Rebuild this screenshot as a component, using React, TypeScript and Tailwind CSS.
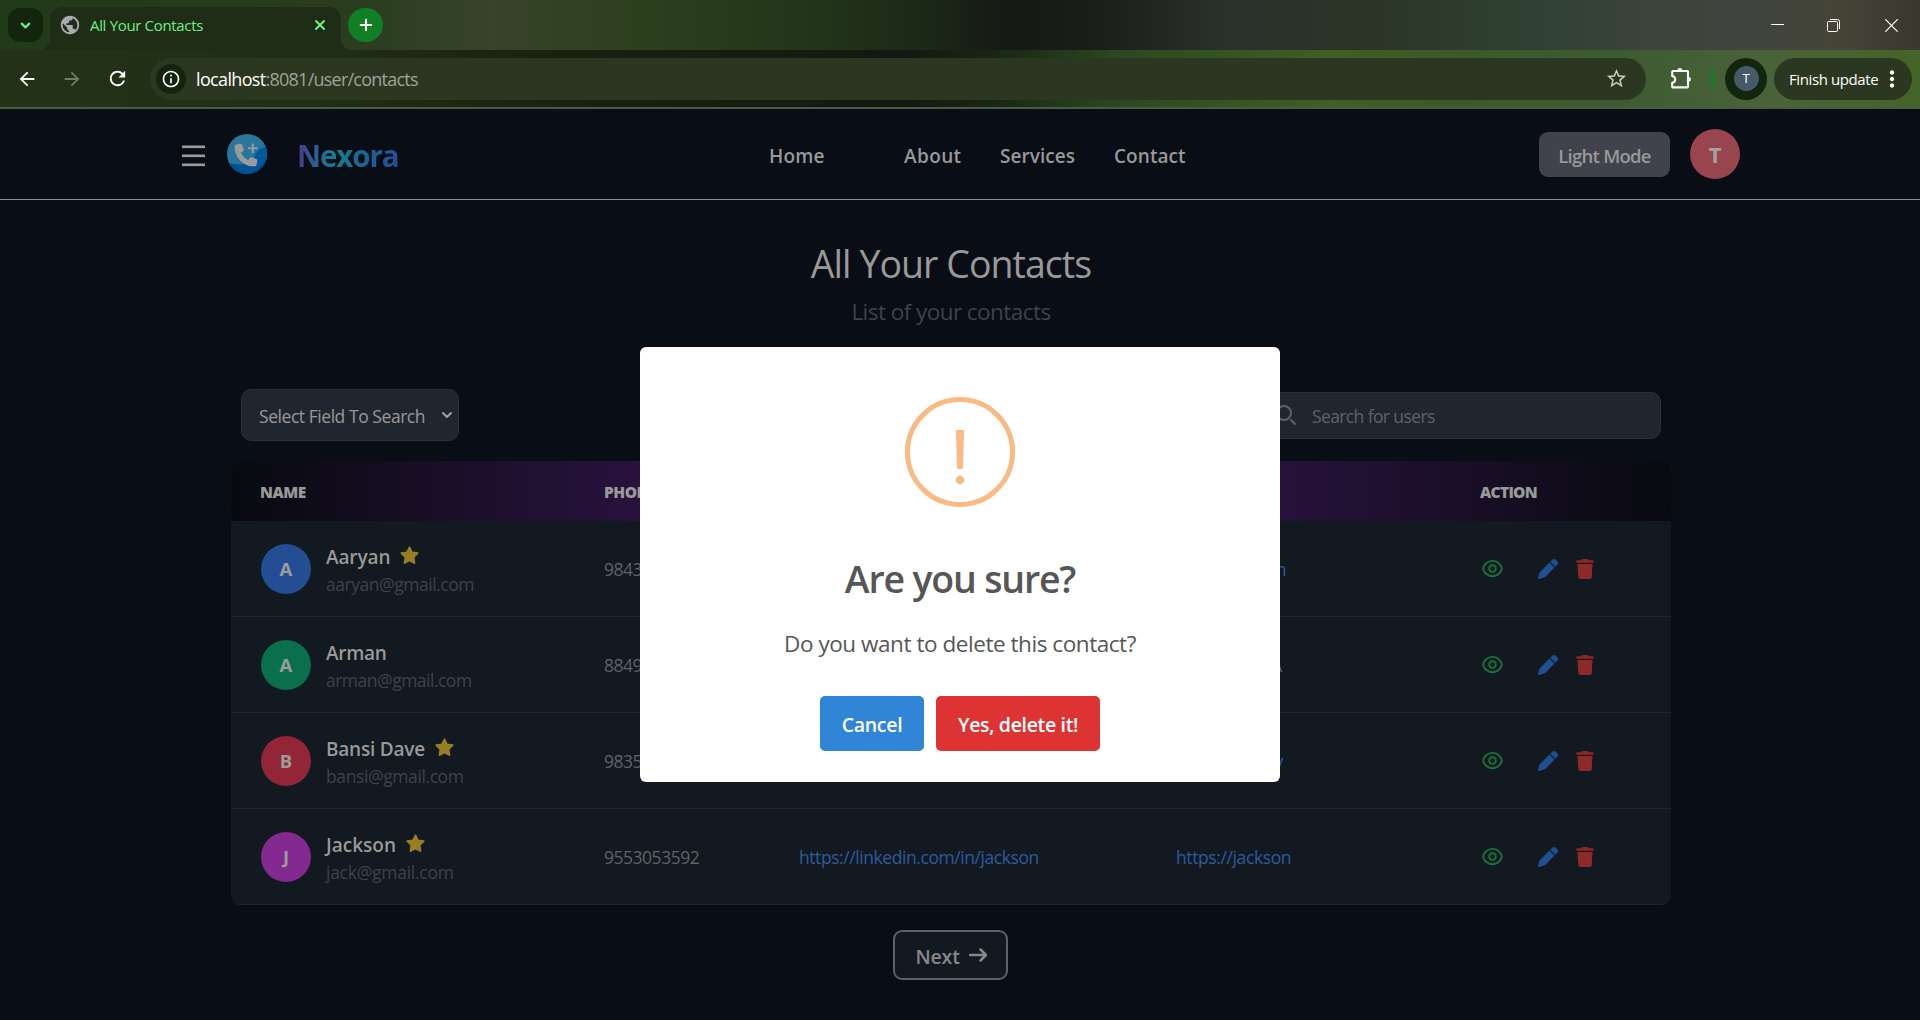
import React from "react";
import {
  MdArrowBack,
  MdArrowForward,
  MdInfoOutline,
  MdMoreVert,
  MdPublic,
  MdRefresh,
  MdStarBorder,
} from "react-icons/md";
import { FaPen, FaPhone, FaTrash } from "react-icons/fa6";
import { RiEyeLine } from "react-icons/ri";
import { ChevronDown, Plus, X } from "lucide-react";

type Contact = {
  name: string;
  nameTracking: string;
  email: string;
  emailTracking: string;
  phone: string;
  favorite: boolean;
  avatar: string;
  linkedin?: string;
  website: string;
  websiteBox: string;
};

const contacts: Contact[] = [
  {
    name: "Aaryan",
    nameTracking: "tracking-[-0.006em]",
    email: "aaryan@gmail.com",
    emailTracking: "tracking-[-0.0265em]",
    phone: "9843",
    favorite: true,
    avatar: "bg-[#234e94]",
    website: "https://aaryan",
    websiteBox: "w-[107px] text-right text-[#2f5a9e]",
  },
  {
    name: "Arman",
    nameTracking: "tracking-[-0.014em]",
    email: "arman@gmail.com",
    emailTracking: "tracking-[-0.029em]",
    phone: "8849",
    favorite: false,
    avatar: "bg-[#0a6f4d]",
    website: "N/A",
    websiteBox: "w-[106px] text-right text-[#5e6269]",
  },
  {
    name: "Bansi Dave",
    nameTracking: "tracking-[-0.012em]",
    email: "bansi@gmail.com",
    emailTracking: "tracking-[-0.023em]",
    phone: "9835",
    favorite: true,
    avatar: "bg-[#922638]",
    website: "https://bansy",
    websiteBox: "w-[107px] text-right text-[#2f5a9e]",
  },
  {
    name: "Jackson",
    nameTracking: "tracking-[0em]",
    email: "jack@gmail.com",
    emailTracking: "tracking-[-0.0155em]",
    phone: "9553053592",
    favorite: true,
    avatar: "bg-[#822a8f]",
    linkedin: "https://linkedin.com/in/jackson",
    website: "https://jackson",
    websiteBox: "text-[#2f5a9e]",
  },
];

function TabStrip() {
  return (
    <div className="flex h-[50px] bg-[linear-gradient(90deg,#213a18_0px,#2a3d1f_360px,#37432a_490px,#2c3f1d_640px,#23361a_800px,#1b2717_930px,#151914_1010px,#1a1d19_1090px,#2a302b_1220px,#2b3626_1380px,#2f4132_1530px,#3d443b_1660px,#40453f_1750px,#454437_1840px,#38382f_1920px)]">
      <button className="mt-2 ml-2 flex h-[34px] w-[35px] items-center justify-center rounded-[12px] bg-[#14250d]">
        <ChevronDown className="size-[15px] text-[#6fee83]" strokeWidth={3.4} />
      </button>
      <div className="relative mt-[7px] ml-[7px] flex h-[43px] w-[291px] items-center rounded-t-[12px] bg-[#202d16] pb-[7px]">
        <span className="absolute bottom-0 -left-3 size-3 bg-[radial-gradient(circle_at_0_0,transparent_12px,#202d16_12.5px)]" />
        <span className="absolute -right-3 bottom-0 size-3 bg-[radial-gradient(circle_at_100%_0,transparent_12px,#202d16_12.5px)]" />
        <MdPublic className="ml-[9px] size-[22px] text-[#a9abb3]" />
        <span className="ml-[9px] text-[15px] leading-5 tracking-[-0.022em] text-[#6fee83]">
          All Your Contacts
        </span>
        <X className="mr-[13px] ml-auto size-[16px] text-[#6fee83]" strokeWidth={3} />
      </div>
      <button className="mt-2 ml-[7px] flex h-[34px] w-[35px] items-center justify-center rounded-full bg-[#117f25]">
        <Plus className="size-[18px] text-white" strokeWidth={2.8} />
      </button>
      <div className="ml-auto flex h-full items-center">
        <svg className="mr-[43px] h-[13px] w-[13px]" viewBox="0 0 13 13">
          <path d="M0 5.5H13" stroke="#fff" strokeWidth="1" />
        </svg>
        <svg className="mr-[45px] h-[13px] w-[13px]" viewBox="0 0 13 13" fill="none" stroke="#fff" strokeWidth="1">
          <rect x="0.5" y="2.5" width="10" height="10" rx="1" />
          <path d="M3 0.5H10.5Q12.5 0.5 12.5 2.5V10" />
        </svg>
        <svg className="mr-[22px] h-[13px] w-[13px]" viewBox="0 0 13 13" stroke="#fff" strokeWidth="1.2">
          <path d="M0.3 0.3L12.7 12.7M12.7 0.3L0.3 12.7" />
        </svg>
      </div>
    </div>
  );
}

function Toolbar() {
  return (
    <div className="flex h-[59px] items-center border-b-2 border-[#4b5b41] bg-[linear-gradient(90deg,#233217_0px,#202d16_340px,#18220f_560px,#131810_900px,#182514_990px,#2b4920_1120px,#3f5f24_1330px,#3b5a26_1430px,#3d5b31_1620px,#4a6239_1760px,#456428_1920px)]">
      <MdArrowBack className="ml-4 size-[22px] text-white" />
      <MdArrowForward className="ml-[23px] size-[22px] text-[#6f7a67]" />
      <MdRefresh className="ml-[23px] size-[23px] text-white" />
      <div className="ml-[21px] flex h-[42px] w-[1496px] items-center rounded-full bg-[#2b3721]">
        <span className="ml-1.5 flex size-[30px] items-center justify-center rounded-full bg-[#14250d]">
          <MdInfoOutline className="size-[20px] text-white" />
        </span>
        <span className="ml-2.5 text-[18px] leading-[22px] text-[#9ea399]">
          <span className="tracking-[-0.036em] text-white">localhost</span>
          <span className="tracking-[-0.0425em]">:8081/user/contacts</span>
        </span>
        <MdStarBorder className="mr-[18px] ml-auto size-[23px] text-[#c9ccc6]" />
      </div>
      <svg className="ml-[24px] h-[21px] w-[22px]" viewBox="0 0 22 21" fill="none">
        <path
          d="M3.2 3H17.4Q18 3 18 3.6V18.6Q18 19.4 17.2 19.4H3.2Q2.2 19.4 2.2 18.4V14.8Q5.2 14.2 5.2 11.4T2.2 8V4Q2.2 3 3.2 3Z"
          stroke="#fff"
          strokeWidth="2.1"
          strokeLinejoin="round"
        />
        <path d="M7.5 2.4a2.4 2.4 0 0 1 4.8 0zM18.6 8.9a2.3 2.3 0 0 1 0 4.8z" fill="#fff" />
      </svg>
      <span className="ml-[19px] h-5 w-[2.5px] bg-[#117f25]" />
      <span className="ml-[11.5px] flex size-[42px] items-center justify-center rounded-full bg-[#14250d]">
        <span className="flex size-[25px] items-center justify-center rounded-full bg-[#465a69] text-[13px] leading-none text-white">
          T
        </span>
      </span>
      <span className="ml-[7px] flex h-[42px] w-[138px] items-center rounded-full bg-[#2b3721]">
        <span className="ml-[15px] text-[15px] leading-5 tracking-[-0.027em] whitespace-nowrap text-white">
          Finish update
        </span>
        <MdMoreVert className="ml-[1px] size-[26px] shrink-0 text-white" />
      </span>
    </div>
  );
}

function Logo() {
  return (
    <svg className="size-10" viewBox="0 0 40 40">
      <defs>
        <linearGradient id="sky" x1="0.2" y1="0" x2="0.7" y2="1">
          <stop offset="0" stopColor="#2f7796" />
          <stop offset="1" stopColor="#1c74a6" />
        </linearGradient>
        <linearGradient id="sea" x1="1" y1="0.2" x2="0.4" y2="1">
          <stop offset="0" stopColor="#005b9f" />
          <stop offset="1" stopColor="#00508f" />
        </linearGradient>
        <clipPath id="disc">
          <circle cx="20" cy="20" r="20" />
        </clipPath>
      </defs>
      <g clipPath="url(#disc)">
        <rect width="40" height="40" fill="url(#sky)" />
        <path d="M40 13C33 13 28 18 27 25C20 32 10 31 0 29V40H40Z" fill="url(#sea)" />
        <path d="M20 40C32 38 37 30 40 24V40Z" fill="#003d78" />
      </g>
      <FaPhone x="7.5" y="9.5" size={23} color="#9b9b9b" />
      <path d="M25.8 9.5V19M21 14.2H30.6" stroke="#9b9b9b" strokeWidth="2" />
    </svg>
  );
}

function Navbar() {
  return (
    <header className="flex h-[91px] items-center border-b border-[#8c8d90] pl-[182px] text-[#999999]">
      <svg className="mt-1 h-[22px] w-[23px]" viewBox="0 0 23 22" fill="#9b9b9b">
        <rect y="0.5" width="23" height="2.6" />
        <rect y="9.5" width="23" height="2.6" />
        <rect y="18.5" width="23" height="2.6" />
      </svg>
      <span className="ml-[22px]">
        <Logo />
      </span>
      <span className="mt-1 ml-[28px] w-[104px] bg-[linear-gradient(90deg,#4a3a92_0%,#2c5f90_20%,#13808f_38%,#1d6292_70%,#234e94_100%)] bg-clip-text pl-0.5 text-[29.5px] leading-10 font-bold tracking-[-0.0364em] text-transparent">
        Nexora
      </span>
      <nav className="mt-1 ml-[370px] flex text-[19px] leading-7 font-semibold">
        <a className="w-[135px] tracking-[0.007em]">Home</a>
        <a className="w-[96px] tracking-[0.02em]">About</a>
        <a className="w-[114px] tracking-[0.003em]">Services</a>
        <a className="tracking-[0.003em]">Contact</a>
      </nav>
      <button className="ml-auto h-[45px] w-[131px] rounded-[9px] bg-[#40434b] pt-[3px] text-[18.5px] leading-6 font-semibold tracking-[-0.0397em] text-[#999999]">
        Light Mode
      </button>
      <span className="mr-[180px] ml-5 flex size-[50px] items-center justify-center rounded-full bg-[#99454f] text-[22px] leading-none font-bold text-[#a3a3a3]">
        T
      </span>
    </header>
  );
}

function Filters() {
  return (
    <div className="mt-[53px] flex h-[52px] items-center justify-between pr-2.5 pl-2.5">
      <div className="flex h-[52px] w-[218px] items-center rounded-[10px] border border-[#2a2f38] bg-[#20262f] pl-[17px] text-[17.5px] leading-6 text-[#999999]">
        <span className="pt-0.5 tracking-[-0.0255em] whitespace-nowrap">Select Field To Search</span>
        <ChevronDown className="ml-[14px] size-[16px] shrink-0 text-[#a0a0a0]" strokeWidth={3} />
      </div>
      <div className="flex h-[47px] w-[402px] items-center rounded-[10px] border border-[#2a2f38] bg-[#20262f] pl-4">
        <svg className="h-5 w-5" viewBox="0 0 20 20" fill="none">
          <path
            d="m19 19-4-4m0-7A7 7 0 1 1 1 8a7 7 0 0 1 14 0Z"
            stroke="#5e6269"
            strokeWidth="2"
            strokeLinecap="round"
            strokeLinejoin="round"
          />
        </svg>
        <span className="ml-4 pt-0.5 text-[17.5px] leading-6 tracking-[-0.035em] text-[#5e6269]">
          Search for users
        </span>
      </div>
    </div>
  );
}

function FavoriteStar() {
  return (
    <svg className="mb-[3px] ml-[10px] h-[19px] w-[19px]" viewBox="0 0 19 19">
      <path
        d="M9.5 1.2L12.1 6.3L17.8 7.1L13.7 11.2L14.6 17.2L9.5 14.5L4.4 17.2L5.3 11.2L1.2 7.1L6.9 6.3Z"
        fill="#977e22"
        stroke="#977e22"
        strokeWidth="1.6"
        strokeLinejoin="round"
      />
    </svg>
  );
}

function ContactsTable() {
  return (
    <div className="mt-5 overflow-hidden rounded-[9px] bg-[#121920]">
      <div className="grid h-[60px] grid-cols-[344px_194px_378px_303px_1fr] items-center bg-[linear-gradient(90deg,#080a10_0%,#42185f_50%,#080a10_100%)] pt-0.5 pl-[29px] text-[15.5px] leading-6 font-extrabold tracking-[-0.03em] text-[#999999]">
        <span>NAME</span>
        <span>PHONE</span>
        <span>LINKEDIN</span>
        <span>WEBSITE</span>
        <span className="pl-px tracking-[-0.045em]">ACTION</span>
      </div>
      {contacts.map((c) => (
        <div
          key={c.name}
          className="grid h-24 grid-cols-[344px_194px_378px_303px_1fr] items-center border-b border-[#1f2630] pl-[29px] text-[17.5px] leading-7"
        >
          <div className="flex items-center pl-px">
            <span
              className={`flex size-[50px] items-center justify-center rounded-full pt-0.5 text-[18.5px] leading-none font-bold text-[#9c9c9c] ${c.avatar}`}
            >
              {c.name[0]}
            </span>
            <div className="ml-[15px] pt-1">
              <div className="flex h-[27px] items-center pt-px text-[19px] font-semibold text-[#999999]">
                <span className={c.nameTracking}>{c.name}</span>
                {c.favorite && <FavoriteStar />}
              </div>
              <div className={`text-[#3e434b] ${c.emailTracking}`}>{c.email}</div>
            </div>
          </div>
          <span className="tracking-[-0.0275em] text-[#5e6269]">{c.phone}</span>
          <span className="pl-px tracking-[-0.0245em] text-[#2f5a9e]">{c.linkedin}</span>
          <span className={`tracking-[-0.0225em] ${c.websiteBox}`}>{c.website}</span>
          <div className="flex items-center pl-0.5">
            <RiEyeLine className="size-[23px] text-[#147638]" />
            <FaPen className="ml-[34px] size-[20px] text-[#234e94]" />
            <FaTrash className="ml-[17px] size-[20px] text-[#8f2929]" />
          </div>
        </div>
      ))}
    </div>
  );
}

function ConfirmDialog() {
  return (
    <div className="absolute top-[347px] left-[640px] flex h-[435px] w-[640px] flex-col items-center rounded-[6px] bg-white font-['Open_Sans',sans-serif] text-[#565656]">
      <svg className="mt-[50px] size-[110px]" viewBox="0 0 110 110" fill="#f8bb86">
        <circle cx="55" cy="55" r="52.5" fill="none" stroke="#f8bb86" strokeWidth="5" />
        <path d="M51 33H59L58 72H52Z" />
        <circle cx="55" cy="83" r="4.3" />
      </svg>
      <h2 className="mt-[47px] text-[37.5px] leading-[50px] font-semibold tracking-[-0.0315em]">
        Are you sure?
      </h2>
      <p className="mt-[24px] text-[22.5px] leading-8 tracking-[-0.02em]">
        Do you want to delete this contact?
      </p>
      <div className="mt-[36px] flex gap-3 text-[19.5px] leading-none font-semibold text-white">
        <button className="h-[55px] w-[104px] rounded-[5px] bg-[#3085d6] pt-0.5 tracking-[-0.0164em]">
          Cancel
        </button>
        <button className="h-[55px] w-[164px] rounded-[5px] bg-[#dd3333] pt-0.5 tracking-[-0.0175em]">
          Yes, delete it!
        </button>
      </div>
    </div>
  );
}

export default function App() {
  return (
    <div className="relative flex h-[1020px] w-[1920px] flex-col overflow-hidden bg-[#090d15] font-['Open_Sans',sans-serif]">
      <TabStrip />
      <Toolbar />
      <Navbar />
      <main className="ml-[231px] flex w-[1440px] flex-col">
        <h1 className="mt-[38px] text-center text-[37.5px] leading-[52px] tracking-[-0.0255em] text-[#999999]">
          All Your Contacts
        </h1>
        <p className="mt-[6px] text-center text-[22.5px] leading-8 tracking-[-0.0245em] text-[#3e434b]">
          List of your contacts
        </p>
        <div className="mt-[8px]">
          <Filters />
        </div>
        <ContactsTable />
        <button className="mt-[25px] mr-0.5 flex h-[50px] w-[115px] items-center self-center rounded-[9px] border-2 border-[#5d6066] bg-[#121920] pl-[21px] text-[19.5px] leading-6 font-semibold text-[#86888b]">
          <span className="pt-[3px] tracking-[-0.01em]">Next</span>
          <svg className="ml-[9px] h-[14px] w-[18px]" viewBox="0 0 18 14" fill="none">
            <path
              d="M1 7H17M11.5 1.5L17 7L11.5 12.5"
              stroke="#86888b"
              strokeWidth="2.5"
              strokeLinecap="round"
              strokeLinejoin="round"
            />
          </svg>
        </button>
      </main>
      <ConfirmDialog />
    </div>
  );
}
